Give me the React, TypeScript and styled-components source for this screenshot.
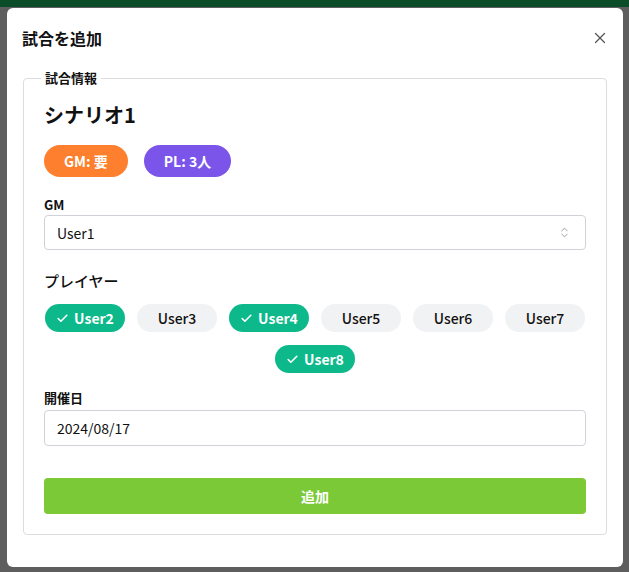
import React from "react";
import styled, { createGlobalStyle } from "styled-components";
import { X, ChevronsUpDown, Check } from "lucide-react";

const GlobalStyle = createGlobalStyle`
  html, body { margin: 0; padding: 0; }
  body {
    background: #5e5e5e;
    font-family: "Noto Sans CJK JP", "Noto Sans", sans-serif;
    color: #111;
  }
  * { box-sizing: border-box; }
`;

const Page = styled.div`
  width: 629px;
  height: 572px;
  background: #5e5e5e;
  overflow: hidden;
`;

const TopBar = styled.div`
  height: 7px;
  background: #0b4c29;
`;

const Modal = styled.div`
  margin: 1px 0 0 7px;
  width: 616px;
  height: 559px;
  background: #fff;
  border-radius: 6px;
  padding: 0 16px 31px;
  display: flex;
  flex-direction: column;
`;

const Header = styled.div`
  display: flex;
  align-items: center;
  justify-content: space-between;
  padding: 16px 0 16px 0;
  height: 60px;
`;

const Title = styled.h2`
  margin: 0 0 0 -1px;
  font-size: 16px;
  font-weight: 700;
  line-height: 28px;
`;

const CloseButton = styled.button`
  border: none;
  background: none;
  padding: 0;
  margin-right: -2px;
  color: #555;
  display: flex;
  cursor: pointer;
`;

const Fieldset = styled.fieldset`
  margin: 0;
  border: 1px solid #dcdde0;
  border-radius: 4px;
  padding: 12px 20px 20px;
  display: flex;
  flex-direction: column;
`;

const Legend = styled.legend`
  padding: 0 4px;
  margin-left: -3px;
  font-size: 13px;
  font-weight: 700;
  line-height: 20px;
`;

const ScenarioName = styled.div`
  font-size: 20px;
  font-weight: 700;
  line-height: 30px;
`;

const BadgeRow = styled.div`
  display: flex;
  gap: 16px;
  margin-top: 15px;
`;

const Badge = styled.span<{ $bg: string }>`
  background: ${(p) => p.$bg};
  color: #fff;
  font-size: 14px;
  font-weight: 700;
  height: 32px;
  padding: 0 20px;
  border-radius: 16px;
  display: inline-flex;
  align-items: center;
  gap: 4px;
`;

const Label = styled.div<{ $mt: number; $size?: number }>`
  margin-top: ${(p) => p.$mt}px;
  font-size: ${(p) => p.$size ?? 13}px;
  font-weight: ${(p) => (p.$size ? 500 : 700)};
  line-height: ${(p) => (p.$size ? 22 : 18)}px;
`;

const Field = styled.div<{ $mt: number; $h: number }>`
  margin-top: ${(p) => p.$mt}px;
  height: ${(p) => p.$h}px;
  border: 1px solid #cfd3d9;
  border-radius: 4px;
  padding: 0 12px;
  display: flex;
  align-items: center;
  justify-content: space-between;
  font-size: 14px;
`;

const SelectIcon = styled.span`
  color: #8a8f98;
  display: flex;
  margin-right: 2px;
`;

const ChipWrap = styled.div`
  margin-top: 12px;
  display: flex;
  flex-wrap: wrap;
  justify-content: center;
  gap: 13px 12px;
`;

const Chip = styled.button<{ $on: boolean }>`
  width: 80px;
  height: 28px;
  border: none;
  border-radius: 14px;
  padding: 0;
  display: inline-flex;
  align-items: center;
  justify-content: center;
  gap: 5px;
  font-family: inherit;
  font-size: 14px;
  font-weight: ${(p) => (p.$on ? 700 : 500)};
  background: ${(p) => (p.$on ? "#0db98b" : "#f1f2f4")};
  color: ${(p) => (p.$on ? "#fff" : "#111")};
`;

const SubmitButton = styled.button`
  margin-top: 32px;
  height: 36px;
  border: none;
  border-radius: 4px;
  background: #7bc936;
  color: #fff;
  font-family: inherit;
  font-size: 14px;
  font-weight: 700;
`;

const users = [
  { name: "User2", on: true },
  { name: "User3", on: false },
  { name: "User4", on: true },
  { name: "User5", on: false },
  { name: "User6", on: false },
  { name: "User7", on: false },
  { name: "User8", on: true },
];

export default function App() {
  return (
    <>
      <GlobalStyle />
      <Page>
        <TopBar />
        <Modal>
          <Header>
            <Title>試合を追加</Title>
            <CloseButton aria-label="close">
              <X size={18} strokeWidth={1.6} />
            </CloseButton>
          </Header>
          <Fieldset>
            <Legend>試合情報</Legend>
            <ScenarioName>シナリオ1</ScenarioName>
            <BadgeRow>
              <Badge $bg="#fe7f2d">GM: 要</Badge>
              <Badge $bg="#7b55e9">PL: 3人</Badge>
            </BadgeRow>
            <Label $mt={19}>GM</Label>
            <Field $mt={1} $h={35}>
              User1
              <SelectIcon>
                <ChevronsUpDown size={13} strokeWidth={1.6} />
              </SelectIcon>
            </Field>
            <Label $mt={20} $size={15}>プレイヤー</Label>
            <ChipWrap>
              {users.map((u) => (
                <Chip key={u.name} $on={u.on}>
                  {u.on && <Check size={13} strokeWidth={3} />}
                  {u.name}
                </Chip>
              ))}
            </ChipWrap>
            <Label $mt={16}>開催日</Label>
            <Field $mt={3} $h={36}>2024/08/17</Field>
            <SubmitButton>追加</SubmitButton>
          </Fieldset>
        </Modal>
      </Page>
    </>
  );
}
